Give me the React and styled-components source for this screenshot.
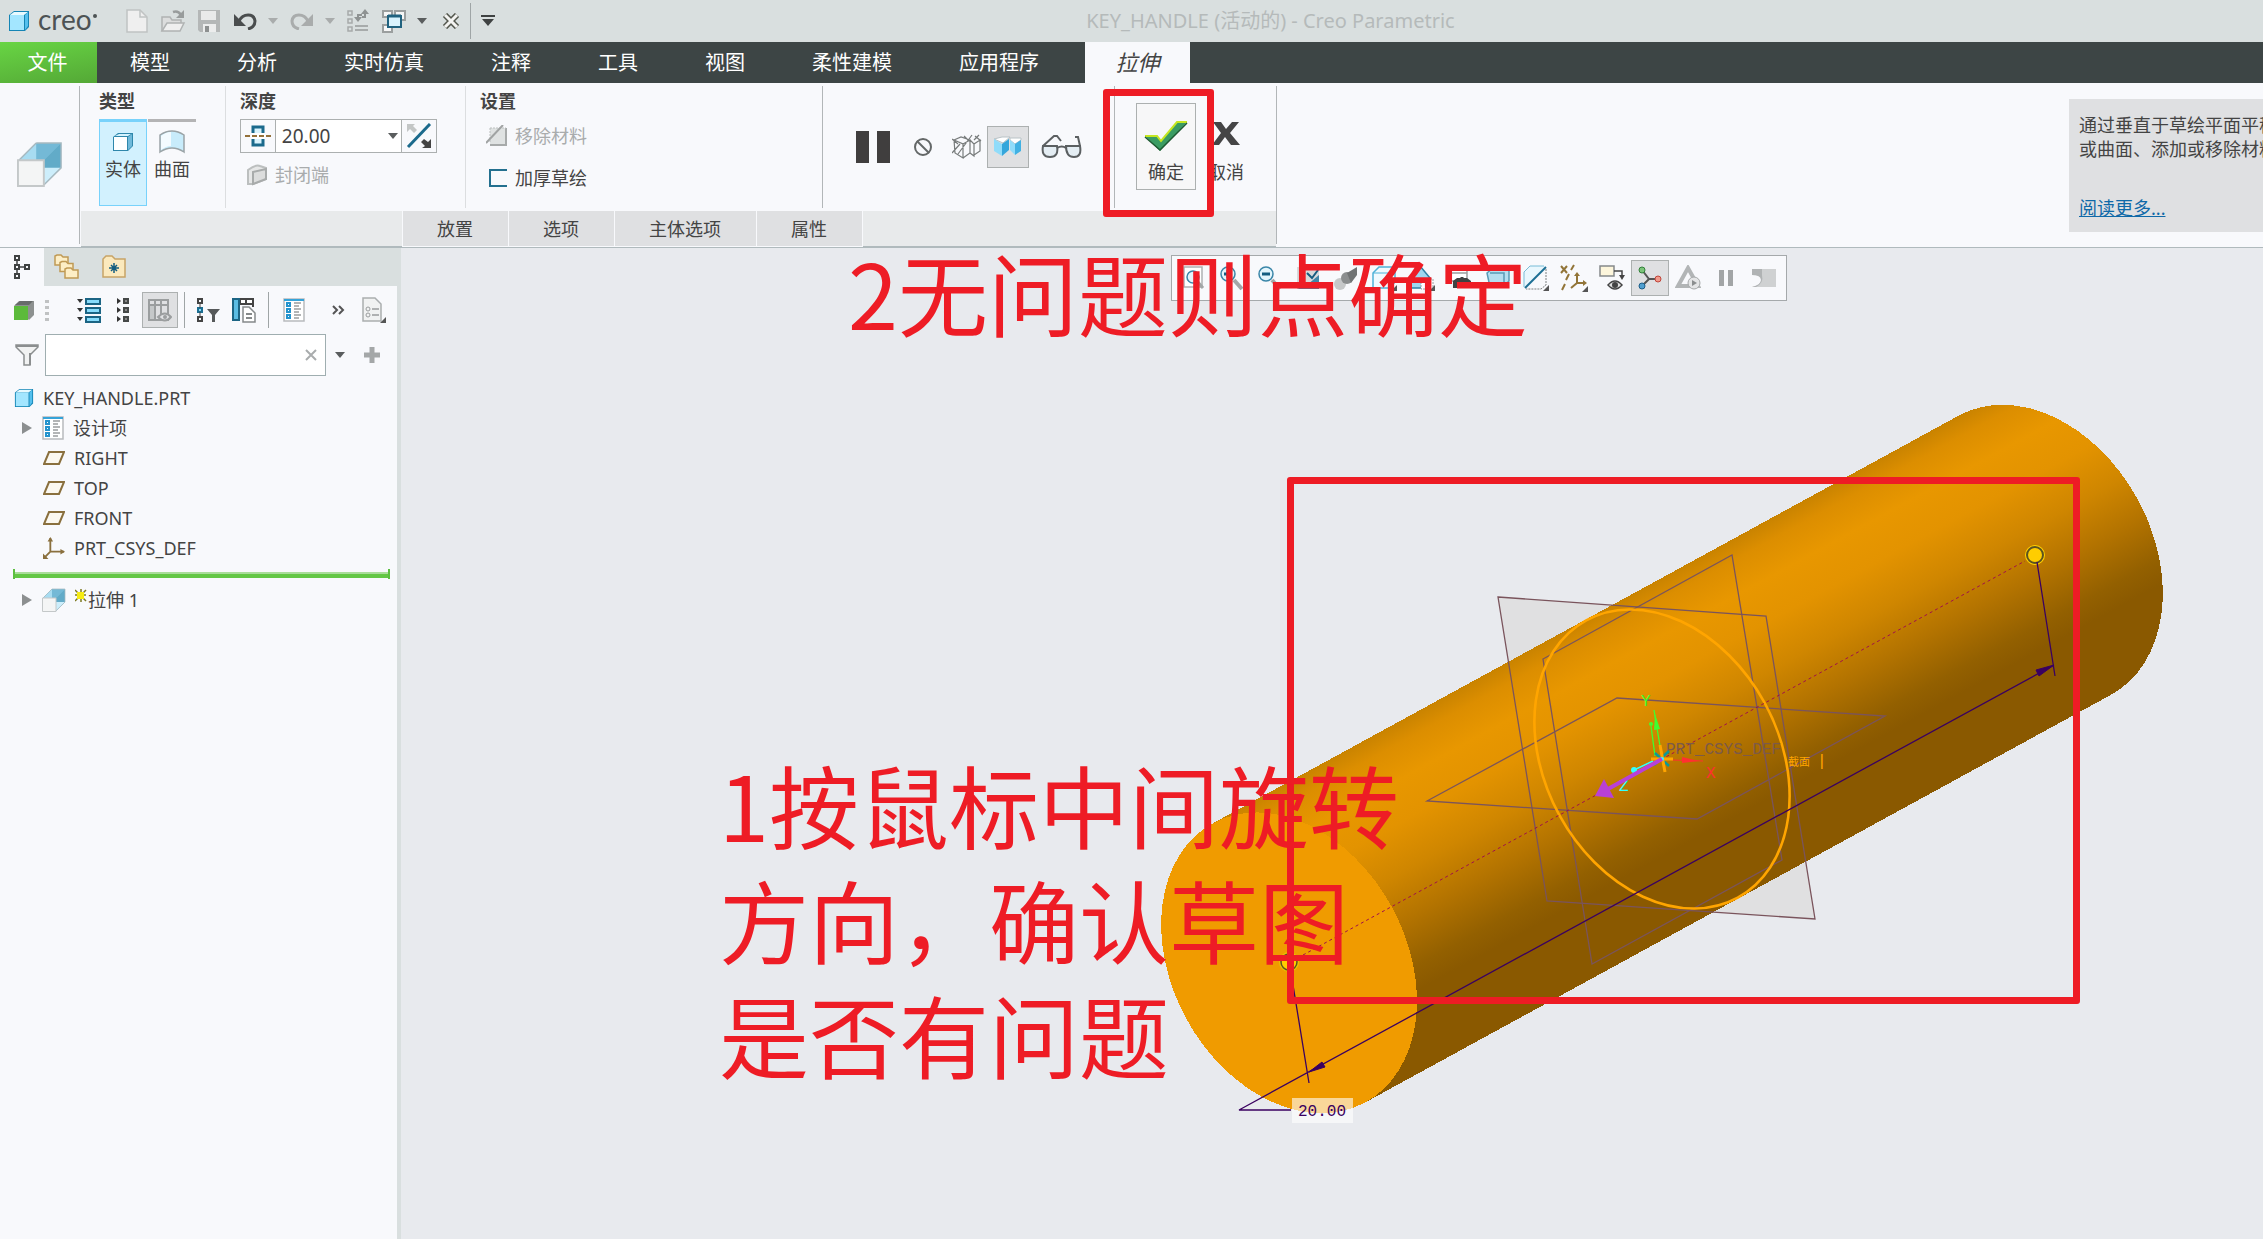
import React, { useState } from "react";
import styled, { createGlobalStyle, css } from "styled-components";

const uiFont = `"Noto Sans", "Noto Sans CJK SC", sans-serif`;

const GlobalStyle = createGlobalStyle`
    * {
        box-sizing: border-box;
    }
    body {
        margin: 0;
        font-family: ${uiFont};
        font-size: 18px;
        color: #444;
        background: #e8eaee;
    }
    button, input, select {
        font: inherit;
        color: inherit;
        margin: 0;
        padding: 0;
    }
    svg {
        display: block;
        flex: none;
    }
`;

const Page = styled.div`
    display: flex;
    flex-direction: column;
    height: 100vh;
    overflow: hidden;
`;

/* ---------- title bar ---------- */

const TitleBar = styled.header`
    display: flex;
    align-items: center;
    height: 42px;
    flex: none;
    background: #d9dfdf;
`;

const QuickAccess = styled.div`
    display: flex;
    align-items: center;
    width: 48%;
    padding-left: 8px;
`;

const Logo = styled.div`
    display: flex;
    align-items: center;
    gap: 8px;
    width: 110px;
    height: 42px;
    font-family: Lato, sans-serif;
    font-size: 28px;
    line-height: 36px;
    color: #4d5354;

    span {
        padding-bottom: 4px;
    }
    &::after {
        content: "";
        width: 4px;
        height: 4px;
        margin: 0 0 10px -7px;
        border-radius: 2px;
        background: #4d5354;
    }
`;

const Slot = styled.button`
    display: flex;
    align-items: center;
    justify-content: center;
    flex: none;
    width: ${({ $w }) => $w || 36}px;
    height: 36px;
    border: ${({ $on }) => ($on ? "1px solid #acb0b0" : "none")};
    background: ${({ $on }) => ($on ? "#dfe0e2" : "transparent")};
`;

const Rule = styled.i`
    flex: none;
    width: 1px;
    height: 36px;
    margin: 0 ${({ $gap }) => $gap || 0}px;
    background: #9fa5a6;
`;

const WindowTitle = styled.h1`
    margin: 0;
    font-size: 20px;
    line-height: 28px;
    font-weight: 400;
    color: #b5baba;
    white-space: nowrap;
`;

/* ---------- ribbon ---------- */

const TabBar = styled.nav`
    display: flex;
    height: 41px;
    flex: none;
    background: #3d4545;
`;

const Tab = styled.button`
    padding: 0 34px 0 33px;
    border: none;
    background: transparent;
    color: #fff;
    font-size: 20px;
    line-height: 41px;
    white-space: nowrap;

    ${({ $kind }) =>
        $kind === "file" &&
        css`
            width: 97px;
            padding: 0 2px 0 0;
            background: linear-gradient(170deg, #68d544, #54a836);
        `}
    ${({ $kind }) =>
        $kind === "active" &&
        css`
            width: 105px;
            margin-left: 12px;
            padding: 0;
            background: #f8f9fc;
            color: #444;
            font-size: 22px;
            font-style: italic;
        `}
`;

const Ribbon = styled.section`
    display: flex;
    height: 165px;
    flex: none;
    background: #f8f9fc;
    border-bottom: 1px solid #b0babd;
`;

const FeatureIcon = styled.div`
    display: flex;
    align-items: center;
    justify-content: center;
    width: 79px;
    padding-bottom: 2px;
    flex: none;
`;

const Divider = styled.i`
    flex: none;
    width: 1px;
    margin: 3px 0;
    background: ${({ $light }) => ($light ? "#dcdee0" : "#b2b6b8")};
`;

const Dashboard = styled.div`
    display: flex;
    flex-direction: column;
    margin-left: 1px;
    flex: none;
    border-bottom: 2px solid #b0babd;
`;

const Groups = styled.div`
    display: flex;
    height: 128px;
`;

const Group = styled.div`
    width: ${({ $w }) => $w}px;
    padding: 5px 0 0 ${({ $pad }) => $pad}px;

    h2 {
        margin: 0 0 5px;
        font-size: 18px;
        line-height: 26px;
        font-weight: 700;
    }
`;

const Row = styled.div`
    display: flex;
    gap: 1px;
`;

const TypeButton = styled.button`
    display: flex;
    flex-direction: column;
    align-items: center;
    gap: 2px;
    width: 48px;
    height: 87px;
    padding-top: 8px;
    border: ${({ $on }) => ($on ? "1px solid #78d2fb" : "none")};
    border-top: 3px solid ${({ $on }) => ($on ? "#78d2fb" : "#b4b4b5")};
    background: ${({ $on }) => ($on ? "#d2f1fe" : "transparent")};
    line-height: 26px;
    white-space: nowrap;

    svg {
        height: 24px;
    }
`;

const DepthBox = styled.div`
    display: flex;
    position: relative;
    width: 197px;
    height: 34px;
    margin-bottom: 5px;
    border: 1px solid #acb0b0;
    background: #fff;

    select {
        width: 128px;
        padding-left: 6px;
        border: solid #acb0b0;
        border-width: 0 1px;
        background: transparent;
        appearance: none;
        font-size: 19px;
    }
    > svg {
        position: absolute;
        right: 38px;
        top: 13px;
        pointer-events: none;
    }
`;

const DepthButton = styled.button`
    display: flex;
    align-items: center;
    justify-content: center;
    width: 34px;
    border: none;
    background: #f8f9fc;
`;

const Option = styled.button`
    display: flex;
    align-items: center;
    gap: 7px;
    height: 34px;
    margin: 0 0 ${({ $gap }) => $gap || 0}px 6px;
    border: none;
    background: transparent;
    line-height: 26px;
    color: ${({ disabled }) => (disabled ? "#a9acad" : "#444")};
`;

const Preview = styled.div`
    display: flex;
    align-items: center;
    width: 291px;
    padding-left: 31px;
    height: 128px;
`;

const PreviewButton = styled(Slot)`
    height: 42px;
    margin-left: ${({ $on }) => ($on ? 7 : 0)}px;
`;

const Confirm = styled.div`
    display: flex;
    position: relative;
    width: 161px;
    padding: 20px 0 0 21px;
`;

const ConfirmButton = styled.button`
    display: flex;
    flex-direction: column;
    align-items: center;
    justify-content: flex-end;
    gap: 8px;
    width: 60px;
    height: 87px;
    padding-bottom: 4px;
    border: 1px solid ${({ $framed }) => ($framed ? "#acb0b0" : "transparent")};
    background: ${({ $framed }) => ($framed ? "#f7f7f8" : "transparent")};
    line-height: 26px;

    svg {
        height: ${({ $framed }) => ($framed ? 30 : 34)}px;
    }
`;

const SubTabs = styled.div`
    display: flex;
    gap: 1px;
    height: 35px;
    padding-left: 322px;
    background: #e8eaeb;
`;

const SubTab = styled.button`
    padding: 0 35px 0 34px;
    border: none;
    outline: 1px solid #f8f9fc;
    background: #dfe0e2;
    line-height: 36px;
`;

const Help = styled.aside`
    width: 194px;
    height: 133px;
    margin: 16px 0 0 auto;
    padding: 14px 0 0 10px;
    background: #dfe0e2;
    line-height: 24px;
    white-space: nowrap;
    overflow: hidden;

    p {
        margin: 0 0 35px;
    }
    a {
        color: #0f69a8;
    }
`;

/* ---------- model tree ---------- */

const Body = styled.main`
    display: flex;
    flex: 1;
    min-height: 0;
`;

const Side = styled.aside`
    display: flex;
    flex-direction: column;
    width: 401px;
    flex: none;
    border-right: 4px solid #d9dfdf;
    background: #f8f9fc;
`;

const SideTabs = styled.div`
    display: flex;
    height: 38px;
    background: #d9dfdf;
`;

const SideTab = styled.button`
    display: flex;
    align-items: center;
    justify-content: center;
    width: ${({ $w }) => $w || 48}px;
    border: none;
    background: ${({ $on }) => ($on ? "#f8f9fc" : "transparent")};
`;

const SideTools = styled.div`
    display: flex;
    align-items: center;
    height: 48px;
    padding-left: 5px;
`;

const ToolGroup = styled.div`
    display: flex;
    padding: 0 7px 0 16px;
`;

const FilterRow = styled.div`
    display: flex;
    align-items: center;
    height: 42px;
    padding-left: 9px;
`;

const SearchBox = styled.label`
    display: flex;
    align-items: center;
    width: 281px;
    height: 42px;
    padding-right: 8px;
    border: 1px solid #9faeb0;
    background: #fff;

    input {
        flex: 1;
        min-width: 0;
        padding: 0 8px;
        border: none;
        outline: none;
        background: transparent;
    }
`;

const Tree = styled.ul`
    margin: 7px 0 0;
    padding: 0;
    list-style: none;
`;

const TreeItem = styled.li`
    display: flex;
    align-items: center;
    gap: 9px;
    height: 30px;
    padding-left: ${({ $level }) => ($level ? 43 : 14)}px;
    line-height: 30px;

    ${({ $open }) =>
        $open &&
        css`
            padding-left: 21px;
        `}
`;

const InsertMark = styled.li`
    height: 10px;
    margin: 6px 7px 6px 13px;
    padding: 3px 0;
    border: solid #5cbf40;
    border-width: 0 2px;

    &::before {
        content: "";
        display: block;
        height: 4px;
        border-top: 2px solid #a9dd99;
        background: #63c745;
    }
`;

/* ---------- graphics area ---------- */

const Viewport = styled.section`
    position: relative;
    flex: 1;
    min-width: 0;
    background: #e8eaee;
`;

const Scene = styled.svg`
    width: 100%;
    height: 100%;
`;

const ViewTools = styled.div`
    position: absolute;
    left: 770px;
    top: 7px;
    display: flex;
    align-items: center;
    height: 46px;
    padding: 0 3px;
    border: 1px solid #a5a9ab;
    background: #f8f9fc;
`;

const Note = styled.p`
    position: absolute;
    left: ${({ $x }) => $x}px;
    top: ${({ $y }) => $y}px;
    margin: 0;
    font-family: "Noto Sans CJK SC", sans-serif;
    font-size: 90px;
    line-height: 115px;
    color: #ee1c25;
    white-space: pre;
`;

const Frame = styled.div`
    position: absolute;
    left: ${({ $x }) => $x}px;
    top: ${({ $y }) => $y}px;
    width: ${({ $w }) => $w}px;
    height: ${({ $h }) => $h}px;
    border: 7px solid #ee1c25;
    border-radius: 3px;
    pointer-events: none;
`;

/* ---------- icons ---------- */

const Svg = ({ w = 24, h = w, children }) => (
    <svg width={w} height={h} viewBox={`0 0 ${w} ${h}`} fill="none" aria-hidden="true">
        {children}
    </svg>
);

const Caret = ({ color = "#5a5d5e" }) => (
    <Svg w={10} h={6}>
        <path d="M0 0h10L5 6z" fill={color} />
    </Svg>
);

const Corner = ({ x, y }) => <path d={`M${x} ${y}v-6l-6 6z`} fill="#555" />;

const Cube = ({ w = 22 }) => (
    <svg width={w} height={w} viewBox="0 0 22 22" aria-hidden="true">
        <path d="M1 5l5-4h15v16l-4 4H1z" fill="#1585b5" />
        <path d="M2 5l4-3h14l-4 3z" fill="#e8faff" />
        <path d="M2 5h14v15H2z" fill="#a3e6ff" />
        <path d="M17 5l3-3v14l-3 4z" fill="#55c0ee" />
    </svg>
);

const SolidCube = () => (
    <Svg w={22}>
        <path d="M1 6l5-4h15v13l-5 5H1z" fill="#2f87ab" />
        <path d="M3 5l4-2h12l-3 2z" fill="#d6f3fe" />
        <path d="M2 6h13v13H2z" fill="#fff" />
        <path d="M16 6l4-3v12l-4 4z" fill="#6fb9da" />
    </Svg>
);

const Surface = () => (
    <Svg w={26} h={24}>
        <path d="M1 5Q13-3 25 5v17Q13 14 1 22z" fill="#c8ecfb" stroke="#9aa3a6" strokeWidth="1.5" />
        <path d="M2 6Q7 2 12 2v14Q7 16 2 20z" fill="#f3fbff" />
    </Svg>
);

const Extrude = ({ w = 48 }) => (
    <svg width={w} height={w} viewBox="0 0 48 48" aria-hidden="true">
        <path d="M20 2h26v26L28 46V20H2z" fill="#8ccbe4" />
        <path d="M20 2h26L28 20H2z" fill="#74b9d6" />
        <path d="M20 2v18H2z" fill="#a8dcf1" />
        <path d="M28 46l18-18H28z" fill="#d6f1fc" />
        <path d="M46 2L28 20v24l18-16z" fill="#62abc8" />
        <path d="M46 28L28 45V28z" fill="#cdeefb" />
        <path d="M20 2h26v26L28 46M20 2L2 20" stroke="#a7b9c0" fill="none" strokeWidth="1.5" />
        <path d="M1 20h27v27H1z" fill="#f4f5f5" stroke="#c4c8c9" strokeWidth="2" />
    </svg>
);

const NewFile = () => (
    <Svg w={22} h={24}>
        <path d="M1 1h13l7 7v15H1z" fill="#efefef" stroke="#c0c3c3" strokeWidth="1.5" />
        <path d="M14 1v7h7" stroke="#c0c3c3" strokeWidth="1.5" />
    </Svg>
);

const OpenFile = () => (
    <Svg w={26} h={24}>
        <path d="M2 22V8h8l2 3h9v4" fill="#dcdddd" stroke="#b0b3b3" strokeWidth="1.5" />
        <path d="M2 22l5-8h17l-4 8z" fill="#efefef" stroke="#b0b3b3" strokeWidth="1.5" />
        <path d="M13 3q5-2 8 3" stroke="#989c9c" strokeWidth="2.5" />
        <path d="M24 1v8h-8z" fill="#989c9c" />
    </Svg>
);

const Save = () => (
    <Svg w={24}>
        <path d="M1 1h22v22H3l-2-2z" fill="#b4b7b7" />
        <path d="M4 2h15v9H4z" fill="#e9eaea" />
        <path d="M6 15h13v8H6z" fill="#eceded" />
        <path d="M8 17h4v6H8z" fill="#8d9090" />
    </Svg>
);

const Undo = ({ color = "#4a4d4e", flip }) => (
    <svg width="24" height="18" viewBox="0 0 24 18" fill="none" aria-hidden="true">
        <g transform={flip ? "matrix(-1 0 0 1 24 0)" : undefined}>
            <path d="M6 9C10 1 21 1 22 9c0 4-3 7-7 8" stroke={color} strokeWidth="3" />
            <path d="M1 2v12h12z" fill={color} />
        </g>
    </svg>
);

const Regenerate = () => (
    <Svg w={24}>
        <path d="M2 2h4v4H2zM2 10h4v4H2zM2 18h4v4H2z" stroke="#a7abab" strokeWidth="1.5" />
        <path d="M9 17h13M9 21h13" stroke="#a7abab" strokeWidth="2" />
        <path d="M12 9V6h4M19 4v4h-3" stroke="#8e9292" strokeWidth="2" />
        <path d="M8 8h8l-4 5zM15 5h8l-4-5z" fill="#8e9292" />
    </Svg>
);

const Windows = () => (
    <Svg w={24}>
        <path d="M1 2h9v6H1zM13 2h10v9h-10zM1 16h9v7H1z" stroke="#9b9f9f" strokeWidth="2" fill="#f6f6f6" />
        <path d="M6 7h13v11H6z" fill="#d9f3fd" stroke="#20627f" strokeWidth="2" />
        <path d="M6 7h13" stroke="#20627f" strokeWidth="3" />
    </Svg>
);

const CloseWindow = () => (
    <Svg w={18} h={16}>
        <path d="M3 2l12 12M15 2L3 14" stroke="#55584f" strokeWidth="6" />
        <path d="M3 2l12 12M15 2L3 14" stroke="#f4f4f2" strokeWidth="3" />
    </Svg>
);

const Customize = () => (
    <Svg w={14} h={12}>
        <path d="M0 1h14" stroke="#3f4242" strokeWidth="2" />
        <path d="M1 4h12l-6 7z" fill="#3f4242" />
    </Svg>
);

const Symmetric = () => (
    <Svg w={26} h={24}>
        <path d="M8 3h10v18H8z" fill="#d9f3fd" stroke="#1b6a8c" strokeWidth="3" />
        <path d="M6 9h14v6H6z" fill="#fff" />
        <path d="M0 12h26" stroke="#94713a" strokeWidth="2" strokeDasharray="5 2" />
    </Svg>
);

const FlipArrows = () => (
    <Svg w={26}>
        <path d="M2 24L24 1" stroke="#1b6a8c" strokeWidth="3" />
        <path d="M1 1h8L7 3l4 4-3 3-4-4-3 3z" fill="#c3c6c6" />
        <path d="M25 25h-9l3-2-4-4 3-3 4 3 3-3z" fill="#444" />
    </Svg>
);

const Capped = () => (
    <Svg w={22}>
        <path d="M2 6q8-6 12-4l6 2v11L7 20H2z" fill="#e6e7e7" stroke="#bcbfbf" strokeWidth="2" />
        <path d="M7 8l13-3v10L7 20z" fill="#dcdddd" stroke="#a8abab" strokeWidth="2" />
    </Svg>
);

const RemoveMaterial = () => (
    <Svg w={22}>
        <path d="M4 3h16v17H4z" fill="#dfe2e2" />
        <path d="M20 3v17H4" stroke="#a7aaaa" strokeWidth="2" />
        <path d="M4 3h16M4 3v14" stroke="#bcbfbf" strokeDasharray="2 1" />
        <path d="M0 18L17 0" stroke="#a0a3a3" strokeWidth="2" />
    </Svg>
);

const Thicken = () => (
    <Svg w={22}>
        <path d="M21 3H4v16h17" stroke="#23708f" strokeWidth="2" />
    </Svg>
);

const Pause = () => (
    <Svg w={34} h={32}>
        <path d="M0 0h13v32H0zM21 0h13v32H21z" fill="#403e3e" />
    </Svg>
);

const Forbid = () => (
    <Svg w={20}>
        <circle cx="10" cy="10" r="8" stroke="#646868" strokeWidth="2" />
        <path d="M4 4l12 12" stroke="#646868" strokeWidth="2" />
    </Svg>
);

const WireCubes = () => (
    <Svg w={30} h={26}>
        <path
            d="M2 6l9 4v14l-8-5zM11 10l7-4v13l-7 5M2 6l7-3 9 3M18 6l4 4v12l-4-3M22 10l6-4v11l-6 4M0 5l6 5M6 20L20 1M12 2l4 4M22 6l5-5M0 19l8-9M23 2l6 5"
            stroke="#777b7b"
            strokeWidth="1.2"
        />
    </Svg>
);

const ShadedCubes = () => (
    <Svg w={30} h={22}>
        <path d="M1 3l8-2h8l-7 6zM17 2h11v2l-6 4-5-4z" fill="#fff" stroke="#b9c3c7" />
        <path d="M1 3l8 5v12l-8-5z" fill="#90dcfa" />
        <path d="M9 8l7-5v11l-7 6z" fill="#35a6db" />
        <path d="M17 4l5 4v11l-5-5z" fill="#90dcfa" />
        <path d="M22 8l6-4v11l-6 4z" fill="#41b1e3" />
    </Svg>
);

const Glasses = () => (
    <Svg w={42} h={24}>
        <path
            d="M2 11h14q2 11-7 11T2 11zM25 11h14q2 11-6 11T25 11z"
            fill="#e4edf3"
            stroke="#5b5f61"
            strokeWidth="2"
        />
        <path d="M16 13q5-3 9 0M2 11L13 1h3l4 5M39 11l-2-9h-3" stroke="#5b5f61" strokeWidth="2" />
    </Svg>
);

const Check = () => (
    <Svg w={44} h={30}>
        <path d="M1 15h12l4 5L33 1h10L16 30z" fill="#3a9c63" />
        <path d="M1 15h12l4 5L33 1h10" stroke="#c4e620" strokeWidth="2" />
        <path d="M43 2L16 29 1 16" stroke="#1f5b33" strokeWidth="1.5" />
    </Svg>
);

const Cancel = () => (
    <Svg w={28} h={24}>
        <path d="M1 0h8l5 7 6-7h7l-9 11 10 12h-9l-6-8-6 8H0l9-12z" fill="#454546" />
    </Svg>
);

const TreeTab = () => (
    <Svg w={18} h={26}>
        <path d="M2 2h4v4H2zM2 11h4v4H2zM2 20h4v4H2zM12 11h4v4h-4z" stroke="#3f4242" strokeWidth="2" />
        <path d="M4 6v5M4 15v5M6 13h6" stroke="#3f4242" strokeWidth="1.5" />
    </Svg>
);

const Folders = () => (
    <Svg w={26} h={26}>
        {[0, 5, 10].map((d) => (
            <path
                key={d}
                d={`M${1 + d} ${11 + d * 1.3}v-9l2-1h4l2 2h5v8z`}
                fill="#fdeec6"
                stroke="#c09a55"
                strokeWidth="1.5"
            />
        ))}
    </Svg>
);

const Favorites = () => (
    <Svg w={24}>
        <path d="M1 22V4l3-3h6l3 3h10v18z" fill="#fbe9bd" stroke="#c8a467" strokeWidth="1.5" />
        <path d="M12 8v10M7 13h10M9 10l6 6M15 10l-6 6" stroke="#155d80" strokeWidth="1.5" />
    </Svg>
);

const GreenCube = () => (
    <Svg w={20} h={22}>
        <path d="M0 7l5-5h15v14l-5 5z" fill="#8d9190" />
        <path d="M1 6l5-4h13l-4 4z" fill="#686c6b" />
        <path d="M0 7h14v14H0z" fill="#5cba3b" />
    </Svg>
);

const Dots = () => (
    <Svg w={4} h={22}>
        <path d="M2 1v22" stroke="#c0c2c3" strokeWidth="4" strokeDasharray="3 3" />
    </Svg>
);

const Expand = () => (
    <Svg w={24} h={26}>
        {[2, 11, 20].map((y) => (
            <g key={y}>
                <path d={`M9 ${y}h14v5H9z`} fill="#88dcfb" stroke="#1c6584" strokeWidth="2" />
                <path d={`M0 ${y}h6l-3 4z`} fill="#333" />
            </g>
        ))}
    </Svg>
);

const Collapse = () => (
    <Svg w={14} h={26}>
        {[2, 11, 20].map((y) => (
            <g key={y}>
                <path d={`M8 ${y}h4v4H8z`} fill="#888" stroke="#454848" strokeWidth="2" />
                <path d={`M1 ${y - 1}v6l4-3z`} fill="#333" />
            </g>
        ))}
    </Svg>
);

const Columns = () => (
    <Svg w={24} h={26}>
        <path d="M2 8h5v14H2z" fill="#c5c8c9" />
        <path d="M1 3h19v20H1zM7 3v20M13 3v20M1 8h19" stroke="#9b9e9f" strokeWidth="2" />
        <path d="M10 20q7-7 13 0-6 7-13 0z" fill="#dfe0e2" stroke="#9b9e9f" strokeWidth="2" />
        <circle cx="17" cy="20" r="2" fill="#9b9e9f" />
    </Svg>
);

const TreeFilter = () => (
    <Svg w={24} h={26}>
        <path d="M2 2h4v4H2zM2 20h4v4H2z" stroke="#444" strokeWidth="2" />
        <path d="M2 11h4v4H2z" stroke="#1c6f93" strokeWidth="2" fill="#88dcfb" />
        <path d="M4 6v5M4 15v5" stroke="#444" />
        <path d="M11 12h13l-5 6v7h-3v-7z" fill="#56595a" />
    </Svg>
);

const TreeColumns = () => (
    <Svg w={24} h={26}>
        <path d="M1 2h20v5H1zM8 2v5M14 2v5M21 2v8" stroke="#444" strokeWidth="2" fill="#fff" />
        <path d="M1 2h6v21H1z" fill="#5bbde3" stroke="#1c6584" strokeWidth="2" />
        <path d="M11 10h6l6 6v9H11z" fill="#fff" stroke="#85898a" strokeWidth="1.5" />
        <path d="M14 17h6M14 21h6" stroke="#85898a" strokeWidth="2" />
    </Svg>
);

const ListSheet = () => (
    <Svg w={22} h={24}>
        <path d="M1 1h20v22H1z" fill="#fff" stroke="#b8bbbd" strokeWidth="1.5" />
        <path d="M1 2h20" stroke="#35a3d9" strokeWidth="2" />
        {[5, 11, 17].map((y) => (
            <g key={y}>
                <path d={`M4 ${y}h3v3H4z`} stroke="#2493cd" strokeWidth="2" />
                <path d={`M11 ${y}h7M11 ${y + 3}h5`} stroke="#9a9d9e" strokeWidth="1.5" />
            </g>
        ))}
    </Svg>
);

const More = () => (
    <Svg w={14} h={10}>
        <path d="M1 1l4 4-4 4M7 1l4 4-4 4" stroke="#555" strokeWidth="2" />
    </Svg>
);

const Report = () => (
    <Svg w={24} h={26}>
        <path d="M1 1h12l6 6v17H1z" fill="#f1f2f2" stroke="#aaaeaf" strokeWidth="1.5" />
        <path d="M10 12h7M10 18h7" stroke="#999c9d" strokeWidth="1.5" />
        <circle cx="6" cy="12" r="2" stroke="#999c9d" />
        <circle cx="6" cy="18" r="2" stroke="#999c9d" />
        <Corner x={24} y={26} />
    </Svg>
);

const Funnel = () => (
    <Svg w={24}>
        <path d="M1 2h22v2l-8 8v10H9V12L1 4z" fill="#f1f2f2" stroke="#8b8e8f" strokeWidth="1.5" />
        <path d="M1 2h22v2H1zM14 10h2v12h-2z" fill="#8b8e8f" />
    </Svg>
);

const Clear = () => (
    <Svg w={12}>
        <path d="M1 1l10 10M11 1L1 11" stroke="#a9acad" strokeWidth="2" />
    </Svg>
);

const Plus = () => (
    <Svg w={18}>
        <path d="M9 1v16M1 9h16" stroke="#a4a7a8" strokeWidth="5" />
    </Svg>
);

const Arrow = () => (
    <Svg w={12} h={14}>
        <path d="M1 1v12l10-6z" fill="#8c8f90" />
    </Svg>
);

const Plane = () => (
    <Svg w={22} h={16}>
        <path d="M6 2h15l-5 12H1z" fill="#fbf8f0" stroke="#8a703e" strokeWidth="2" />
    </Svg>
);

const Csys = () => (
    <svg width="22" height="24" viewBox="0 0 24 24" fill="none" aria-hidden="true">
        <path d="M8 1v15h15M8 16l-7 7" stroke="#8a703e" strokeWidth="2" />
        <path d="M5 5l3-5 3 5zM19 13l5 3-5 3zM0 18v6h6z" fill="#8a703e" />
    </svg>
);

const Spark = () => (
    <Svg w={12} h={22}>
        <path d="M0 5l11 11M11 5L0 16M0 10h11M6 4v13" stroke="#7d7a20" strokeWidth="1.5" />
        <path d="M2 7h7v7H2z" fill="#f6ec12" />
    </Svg>
);

const Lens = ({ sign }) => (
    <Svg w={26}>
        <path d="M15 15l8 9" stroke="#a3a6a7" strokeWidth="4" />
        <circle cx="9" cy="9" r="7" fill="#e3f5fc" stroke="#3a86a8" strokeWidth="1.5" />
        {sign && <path d={sign} stroke="#155d80" strokeWidth="3" />}
    </Svg>
);

const FitView = () => (
    <Svg w={26}>
        <path d="M3 2h18v20H3z" stroke="#aeb1b2" strokeWidth="1.5" fill="#fff" />
        <circle cx="12" cy="12" r="6" fill="#e3f5fc" stroke="#3a86a8" strokeWidth="1.5" />
        <path d="M16 16l6 7" stroke="#a3a6a7" strokeWidth="3" />
    </Svg>
);

const Refit = () => (
    <Svg w={26}>
        <path d="M2 2h22v22H2z" fill="#d8dadb" />
        <path d="M2 24h22V10L12 20z" fill="#3f87a8" />
        <path d="M12 8l5 5 6-8" stroke="#155d80" strokeWidth="2" />
    </Svg>
);

const Render = () => (
    <Svg w={26}>
        <circle cx="7" cy="19" r="6" fill="#c6c8c9" />
        <circle cx="14" cy="13" r="6" fill="#8b8e8f" />
        <path d="M14 8l10-6v8l-6 8z" fill="#707374" />
    </Svg>
);

const DisplayStyle = () => (
    <Svg w={26}>
        <path d="M2 8l6-6h16v15l-5 6H2z" fill="#f0fafe" stroke="#4fb2d8" strokeWidth="1.5" />
        <path d="M2 8h17v15" stroke="#4fb2d8" />
        <Corner x={26} y={26} />
    </Svg>
);

const SavedViews = () => (
    <Svg w={26}>
        <path d="M2 13L11 1l10 12v10H2z" fill="#9ed8f0" stroke="#2f81a5" strokeWidth="1.5" />
        <path d="M12 14h12v10H12z" fill="#fff" stroke="#9a9d9e" strokeDasharray="2 1" />
        <Corner x={26} y={26} />
    </Svg>
);

const ViewManager = () => (
    <Svg w={26}>
        <path d="M3 1h17v15H3zM3 8h17" stroke="#9a9d9e" strokeWidth="1.5" fill="#fff" />
        <path d="M6 23v-7l4-3h3l1-1h2l1 1h3l4 3v7h-7v-4h-3v4z" fill="#3f4242" />
    </Svg>
);

const Section = () => (
    <Svg w={26}>
        <path d="M2 8l6-5h16v13l-6 6H5z" fill="#b5def0" stroke="#5a9ab5" strokeWidth="1.5" />
        <path d="M5 8h14v14" stroke="#5a9ab5" strokeWidth="1.5" />
    </Svg>
);

const Perspective = () => (
    <Svg w={26}>
        <path d="M1 7l6-6h16L2 23z" fill="#e9f7fd" />
        <path d="M2 23L23 2" stroke="#1c6f93" strokeWidth="2" />
        <path d="M1 7l6-6h14M1 7v15" stroke="#79bcd7" />
        <path d="M23 4v16l-5 4H3" stroke="#7d8081" strokeDasharray="2 1" />
        <Corner x={26} y={26} />
    </Svg>
);

const Datums = () => (
    <Svg w={28} h={28}>
        <path
            d="M1 2l6 7M7 2L1 9M14 1l-3 5M9 10l-3 6M5 20l-3 6M17 10v9h8M17 19l-6 5"
            stroke="#927538"
            strokeWidth="2"
        />
        <path d="M14 12l3-4 3 4zM23 16l4 3-4 3z" fill="#927538" />
        <Corner x={28} y={28} />
    </Svg>
);

const Annotate = () => (
    <Svg w={26} h={28}>
        <path d="M1 2h14v10H1z" fill="#fdf6dc" stroke="#85898a" strokeWidth="1.5" />
        <path d="M15 7h8v6" stroke="#444" strokeWidth="1.5" />
        <path d="M20 11h6l-3 5z" fill="#444" />
        <path d="M9 21q7-8 14 0-7 8-14 0z" fill="#ddd" stroke="#444" strokeWidth="1.5" />
        <circle cx="16" cy="21" r="3" fill="#444" />
    </Svg>
);

const Spin = () => (
    <Svg w={26}>
        <path d="M5 5l7 9 10 0M12 14l-7 7" stroke="#555" strokeWidth="2" />
        <circle cx="5" cy="5" r="3" fill="#7cc47a" stroke="#33803a" />
        <circle cx="21" cy="14" r="3" fill="#f09a8c" stroke="#c0453b" />
        <circle cx="5" cy="21" r="3" fill="#4f9fd0" stroke="#1c5d88" />
    </Svg>
);

const Simulate = () => (
    <Svg w={26}>
        <path d="M13 3l10 18H3z" stroke="#b2b5b6" strokeWidth="4" />
        <circle cx="19" cy="18" r="6" fill="#e4e5e6" stroke="#a6a9aa" />
        <path d="M17 15v6l5-3z" fill="#8b8e8f" />
    </Svg>
);

const SmallPause = () => (
    <Svg w={18} h={20}>
        <path d="M2 2h5v16H2zM11 2h5v16h-5z" fill="#a2a5a6" />
    </Svg>
);

const Stress = () => (
    <Svg w={26} h={20}>
        <path d="M1 1h24v18H1q9-2 9-7T1 7z" fill="#cfd1d2" />
        <path d="M1 1h10v6q2 8-6 12H1q9-2 9-7T1 7z" fill="#b0b3b4" />
    </Svg>
);

/* ---------- model drawing ---------- */

// the cylinder is drawn flat along x and turned onto its axis
const axis = "translate(1662 759) rotate(-28.66)";

const ModelScene = () => (
    <Scene viewBox="401 248 1862 991" preserveAspectRatio="xMinYMin slice" role="img" aria-label="KEY_HANDLE">
        <defs>
            <linearGradient id="shade" x1="0" y1="-159" x2="0" y2="159" gradientUnits="userSpaceOnUse">
                <stop offset="0" stopColor="#c98300" />
                <stop offset="0.06" stopColor="#dc8e00" />
                <stop offset="0.16" stopColor="#e89700" />
                <stop offset="0.28" stopColor="#e39300" />
                <stop offset="0.42" stopColor="#cf8600" />
                <stop offset="0.56" stopColor="#b37300" />
                <stop offset="0.7" stopColor="#936000" />
                <stop offset="0.77" stopColor="#8a5900" />
            </linearGradient>
        </defs>
        <path d="M1498 597L1766 616 1815 919 1547 901z" fill="#e0e0e1" />
        <path d="M1592 964L1543 659 1732 555 1782 860z" fill="#e0e0e1" />
        <g transform={axis} shapeRendering="crispEdges">
            <path d="M-425 -159H425A117 159 0 0 1 425 159H-425z" fill="url(#shade)" />
            <ellipse cx="-425" cy="0" rx="117" ry="159" fill="#f09b00" />
        </g>
        <g fill="none" stroke="#7a545c" strokeWidth="1.3">
            <path d="M1498 597L1766 616 1815 919 1547 901z" />
            <path d="M1592 964L1543 659 1732 555 1782 860z" />
            <path d="M1427 801L1617 698 1885 716 1697 819z" />
        </g>
        <ellipse transform={axis} rx="117" ry="158" fill="none" stroke="#ffa500" strokeWidth="2.6" />
        <path d="M1303 955L2025 561" stroke="#a0104a" strokeDasharray="3 3" />

        <g fontFamily="'Liberation Mono', monospace" fontSize="16">
            <text x="1666" y="754" fill="#7d5a48">PRT_CSYS_DEF</text>
            <text x="1641" y="706" fill="#3fff2f">Y</text>
            <text x="1706" y="778" fill="#ff3030">X</text>
            <text x="1619" y="791" fill="#3ff">Z</text>
            <text x="1817" y="766" fill="#ffa500">|</text>
        </g>
        <text x="1788" y="766" fill="#ffa500" fontFamily="'Noto Sans CJK SC', sans-serif" fontSize="11">截面</text>

        <path d="M1655 756L1651 726M1661 752L1654 710" stroke="#3fff2f" strokeWidth="1.3" />
        <circle cx="1651" cy="724" r="2" fill="#3fff2f" />
        <path d="M1655 714l5 15-6 1z" fill="#3fff2f" />
        <path d="M1672 760L1703 761" stroke="#ff3030" />
        <path d="M1699 761l-17-4v6z" fill="#ff3030" />
        <path d="M1653 761L1634 770" stroke="#3ff" strokeWidth="1.5" />
        <circle cx="1634" cy="770" r="3" fill="#3ff" />
        <path d="M1655 753l14 13M1669 751l-15 14" stroke="#0a9a9a" strokeWidth="2.5" />
        <path d="M1651 759h22M1660 745l5 27" stroke="#ffa500" strokeWidth="3" />
        <circle cx="1662" cy="759" r="2" fill="#3ff" />
        <path d="M1662 759L1608 789" stroke="#b840d8" strokeWidth="4" />
        <path d="M1604 779L1614 798 1595 796z" fill="#b840d8" />

        <circle cx="2035" cy="555" r="9" stroke="#ffd000" fill="none" strokeWidth="2" />
        <circle cx="2035" cy="555" r="8" stroke="#5d5420" fill="#ffcd00" strokeWidth="2" />
        <circle cx="1289" cy="962" r="9" stroke="#e8c400" fill="#ffcd00" strokeWidth="2" />
        <circle cx="1289" cy="962" r="8" stroke="#5d5420" fill="none" strokeWidth="1.5" />
        <path
            d="M1291 1110H1239L2054 665M1293 985L1309 1083M2037 562L2055 676"
            stroke="#3a0060"
            fill="none"
            strokeWidth="1.3"
        />
        <path d="M1309 1072L1322 1062 1325 1067zM2054 665L2036 670 2039 676z" fill="#3a0060" stroke="#3a0060" />
        <path d="M1292 1098h61v25h-61z" fill="#fff" fillOpacity="0.6" />
        <text x="1298" y="1116" fill="#3a0060" fontFamily="'Liberation Mono', monospace" fontSize="16">
            20.00
        </text>
    </Scene>
);

const menuTabs = ["模型", "分析", "实时仿真", "注释", "工具", "视图", "柔性建模", "应用程序"];
const subTabs = ["放置", "选项", "主体选项", "属性"];

const viewTools = [
    ["重新调整", <FitView />],
    ["放大", <Lens sign="M5 9h8M9 5v8" />],
    ["缩小", <Lens sign="M5 9h8" />],
    ["重画", <Refit />],
    ["渲染选项", <Render />],
    ["显示样式", <DisplayStyle />],
    ["已保存方向", <SavedViews />],
    ["视图管理器", <ViewManager />],
    ["截面", <Section />],
    ["透视图", <Perspective />],
    ["基准显示过滤器", <Datums />],
    ["注释显示", <Annotate />],
    ["旋转中心", <Spin />, true],
    ["仿真", <Simulate />],
    ["暂停仿真", <SmallPause />],
    ["仿真结果", <Stress />],
];

const App = () => {
    const [depth, setDepth] = useState("20.00");
    const [filter, setFilter] = useState("");

    return (
        <Page>
            <GlobalStyle />
            <TitleBar>
                <QuickAccess>
                    <Logo>
                        <Cube />
                        <span>creo</span>
                    </Logo>
                    <Slot $w={38} aria-label="新建"><NewFile /></Slot>
                    <Slot $w={34} aria-label="打开"><OpenFile /></Slot>
                    <Slot $w={38} aria-label="保存"><Save /></Slot>
                    <Slot $w={34} aria-label="撤消"><Undo /></Slot>
                    <Slot $w={22} aria-label="撤消列表"><Caret color="#a9acac" /></Slot>
                    <Slot $w={36} aria-label="重做"><Undo color="#a9acac" flip /></Slot>
                    <Slot $w={20} aria-label="重做列表"><Caret color="#a9acac" /></Slot>
                    <Slot $w={36} aria-label="重新生成"><Regenerate /></Slot>
                    <Slot $w={36} aria-label="窗口"><Windows /></Slot>
                    <Slot $w={20} aria-label="窗口列表"><Caret /></Slot>
                    <Slot $w={38} aria-label="关闭"><CloseWindow /></Slot>
                    <Rule />
                    <Slot $w={34} aria-label="自定义"><Customize /></Slot>
                </QuickAccess>
                <WindowTitle>KEY_HANDLE (活动的) - Creo Parametric</WindowTitle>
            </TitleBar>

            <TabBar>
                <Tab $kind="file">文件</Tab>
                {menuTabs.map((name) => (
                    <Tab key={name}>{name}</Tab>
                ))}
                <Tab $kind="active">拉伸</Tab>
            </TabBar>

            <Ribbon>
                <FeatureIcon>
                    <Extrude w={46} />
                </FeatureIcon>
                <Divider />
                <Dashboard>
                    <Groups>
                        <Group $w={144} $pad={18}>
                            <h2>类型</h2>
                            <Row>
                                <TypeButton $on><SolidCube />实体</TypeButton>
                                <TypeButton><Surface />曲面</TypeButton>
                            </Row>
                        </Group>
                        <Divider $light />
                        <Group $w={239} $pad={14}>
                            <h2>深度</h2>
                            <DepthBox>
                                <DepthButton aria-label="对称"><Symmetric /></DepthButton>
                                <select aria-label="深度" value={depth} onChange={(e) => setDepth(e.target.value)}>
                                    <option>20.00</option>
                                </select>
                                <DepthButton aria-label="反向"><FlipArrows /></DepthButton>
                                <Caret />
                            </DepthBox>
                            <Option disabled><Capped />封闭端</Option>
                        </Group>
                        <Divider $light />
                        <Group $w={356} $pad={14}>
                            <h2>设置</h2>
                            <Option disabled $gap={8}><RemoveMaterial />移除材料</Option>
                            <Option><Thicken />加厚草绘</Option>
                        </Group>
                        <Divider />
                        <Preview>
                            <PreviewButton $w={38} aria-label="暂停"><Pause /></PreviewButton>
                            <PreviewButton $w={62} aria-label="无预览"><Forbid /></PreviewButton>
                            <PreviewButton $w={26} aria-label="分离"><WireCubes /></PreviewButton>
                            <PreviewButton $w={42} $on aria-label="连接"><ShadedCubes /></PreviewButton>
                            <PreviewButton $w={66} aria-label="预览"><Glasses /></PreviewButton>
                        </Preview>
                        <Divider />
                        <Confirm>
                            <ConfirmButton $framed><Check />确定</ConfirmButton>
                            <ConfirmButton><Cancel />取消</ConfirmButton>
                            <Frame $x={-12} $y={6} $w={111} $h={128} />
                        </Confirm>
                    </Groups>
                    <SubTabs>
                        {subTabs.map((name) => (
                            <SubTab key={name}>{name}</SubTab>
                        ))}
                    </SubTabs>
                </Dashboard>
                <Divider />
                <Help>
                    <p>
                        通过垂直于草绘平面平移
                        <br />
                        或曲面、添加或移除材料
                    </p>
                    <a href="#more">阅读更多...</a>
                </Help>
            </Ribbon>

            <Body>
                <Side>
                    <SideTabs>
                        <SideTab $w={44} $on aria-label="模型树"><TreeTab /></SideTab>
                        <SideTab $w={46} aria-label="文件夹浏览器"><Folders /></SideTab>
                        <SideTab aria-label="收藏夹"><Favorites /></SideTab>
                    </SideTabs>
                    <SideTools>
                        <Slot $w={38} aria-label="模型"><GreenCube /></Slot>
                        <Slot $w={8} aria-label="拖动"><Dots /></Slot>
                        <ToolGroup>
                            <Slot $w={44} aria-label="全部展开"><Expand /></Slot>
                            <Slot $w={24} aria-label="全部折叠"><Collapse /></Slot>
                        </ToolGroup>
                        <Slot $w={36} $on aria-label="显示列"><Columns /></Slot>
                        <Rule $gap={6} />
                        <Slot $w={34} aria-label="树过滤器"><TreeFilter /></Slot>
                        <Slot $w={38} aria-label="树列"><TreeColumns /></Slot>
                        <Rule $gap={5} />
                        <Slot $w={40} aria-label="设计项"><ListSheet /></Slot>
                        <Slot $w={50} aria-label="更多"><More /></Slot>
                        <Slot $w={20} aria-label="设置"><Report /></Slot>
                    </SideTools>
                    <FilterRow>
                        <Slot aria-label="过滤器"><Funnel /></Slot>
                        <SearchBox>
                            <input
                                aria-label="搜索"
                                value={filter}
                                onChange={(e) => setFilter(e.target.value)}
                            />
                            <Clear />
                        </SearchBox>
                        <Slot $w={28} aria-label="搜索选项"><Caret /></Slot>
                        <Slot aria-label="添加"><Plus /></Slot>
                    </FilterRow>
                    <Tree>
                        <TreeItem><Cube w={20} />KEY_HANDLE.PRT</TreeItem>
                        <TreeItem $open $level={1}><Arrow /><ListSheet />设计项</TreeItem>
                        <TreeItem $level={1}><Plane />RIGHT</TreeItem>
                        <TreeItem $level={1}><Plane />TOP</TreeItem>
                        <TreeItem $level={1}><Plane />FRONT</TreeItem>
                        <TreeItem $level={1}><Csys />PRT_CSYS_DEF</TreeItem>
                        <InsertMark />
                        <TreeItem $open $level={1}>
                            <Arrow />
                            <Extrude w={24} />
                            <Row><Spark />拉伸 1</Row>
                        </TreeItem>
                    </Tree>
                </Side>

                <Viewport>
                    <ModelScene />
                    <ViewTools>
                        {viewTools.map(([label, icon, on]) => (
                            <Slot key={label} $w={38} $on={on} aria-label={label}>
                                {icon}
                            </Slot>
                        ))}
                    </ViewTools>
                    <Frame $x={886} $y={229} $w={793} $h={527} />
                    <Note $x={447} $y={-14}>2无问题则点确定</Note>
                    <Note $x={318} $y={498}>
                        {"1按鼠标中间旋转\n方向，确认草图\n是否有问题"}
                    </Note>
                </Viewport>
            </Body>
        </Page>
    );
};

export default App;
